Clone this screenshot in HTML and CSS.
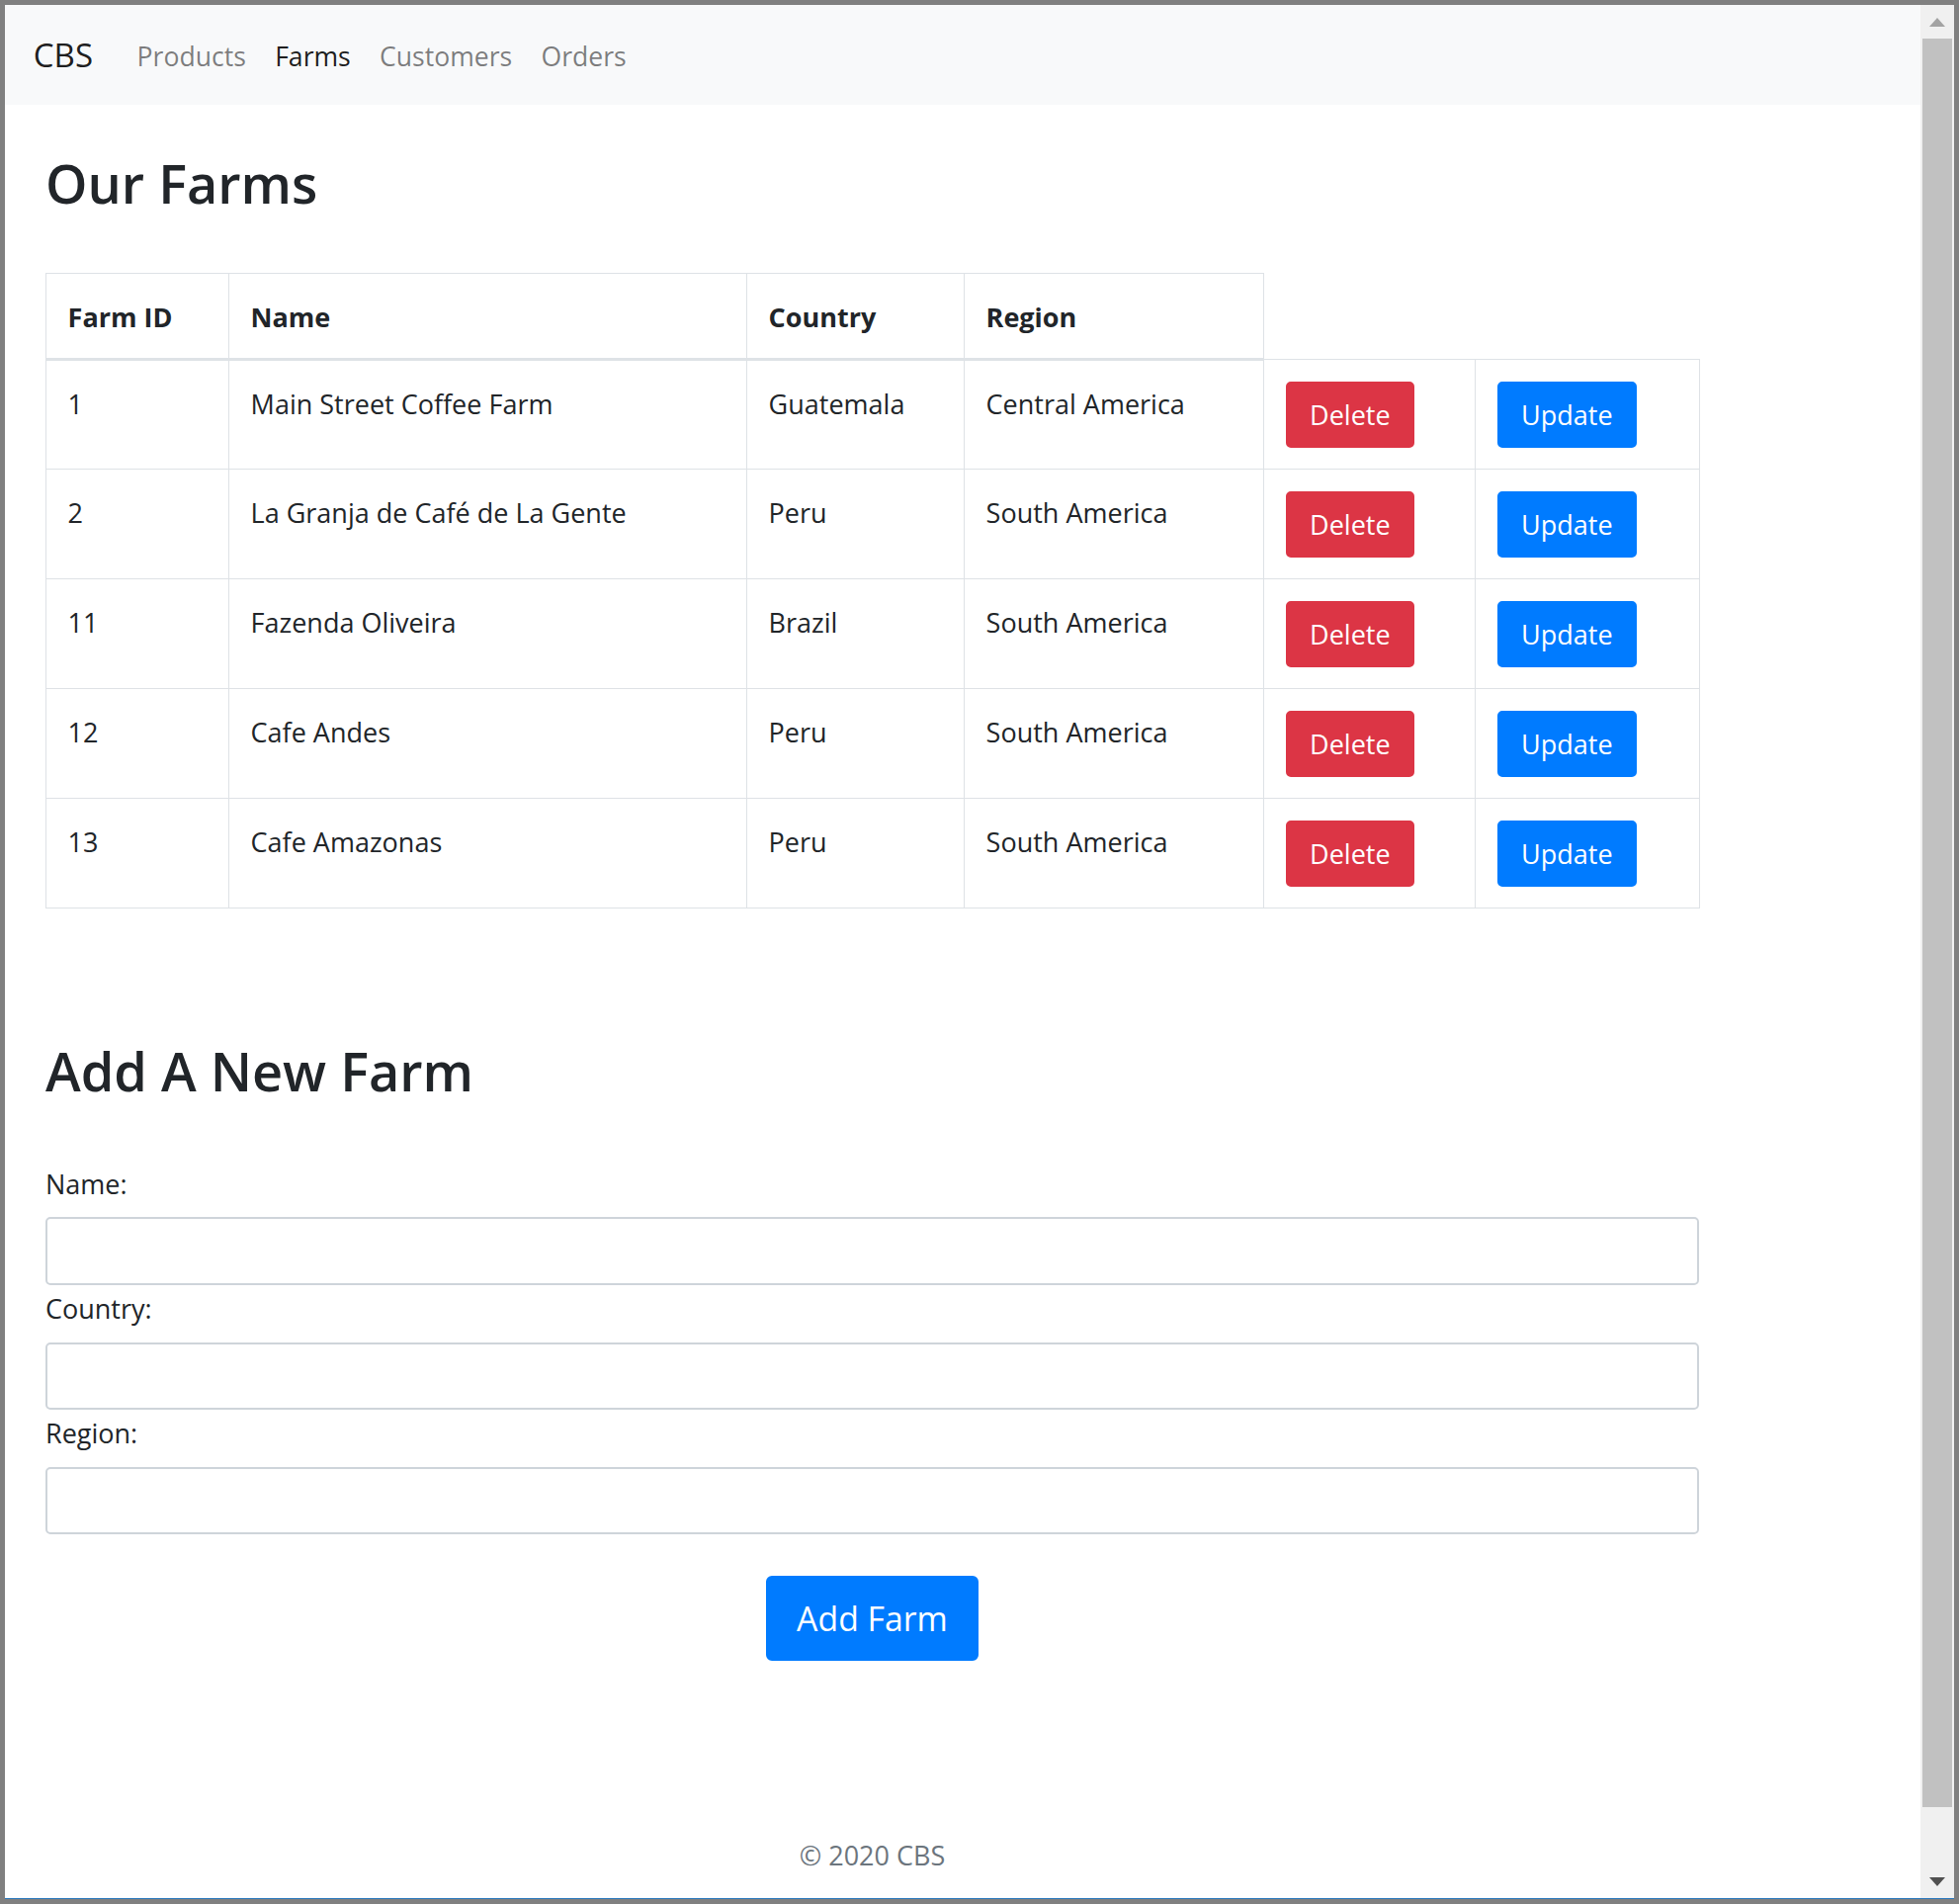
FILE: index.html
```html
<!DOCTYPE html>
<html lang="en">
<head>
<meta charset="utf-8">
<title>CBS - Farms</title>
<link rel="stylesheet" href="styles.css">
</head>
<body>
<div class="window">
  <div class="viewport">
    <div class="page">
      <nav class="navbar">
        <a class="brand" href="#">CBS</a>
        <ul class="nav">
          <li><a class="nav-link" href="#">Products</a></li>
          <li><a class="nav-link active" href="#">Farms</a></li>
          <li><a class="nav-link" href="#">Customers</a></li>
          <li><a class="nav-link" href="#">Orders</a></li>
        </ul>
      </nav>
      <main class="content">
        <h1 class="title">Our Farms</h1>
        <table class="farms">
          <colgroup>
            <col class="w-id"><col class="w-name"><col class="w-country"><col class="w-region"><col class="w-del"><col class="w-upd">
          </colgroup>
          <thead>
            <tr><th>Farm ID</th><th>Name</th><th>Country</th><th>Region</th></tr>
          </thead>
          <tbody>
            <tr><td>1</td><td>Main Street Coffee Farm</td><td>Guatemala</td><td>Central America</td><td><button class="btn btn-danger">Delete</button></td><td><button class="btn btn-primary">Update</button></td></tr>
            <tr><td>2</td><td>La Granja de Café de La Gente</td><td>Peru</td><td>South America</td><td><button class="btn btn-danger">Delete</button></td><td><button class="btn btn-primary">Update</button></td></tr>
            <tr><td>11</td><td>Fazenda Oliveira</td><td>Brazil</td><td>South America</td><td><button class="btn btn-danger">Delete</button></td><td><button class="btn btn-primary">Update</button></td></tr>
            <tr><td>12</td><td>Cafe Andes</td><td>Peru</td><td>South America</td><td><button class="btn btn-danger">Delete</button></td><td><button class="btn btn-primary">Update</button></td></tr>
            <tr><td>13</td><td>Cafe Amazonas</td><td>Peru</td><td>South America</td><td><button class="btn btn-danger">Delete</button></td><td><button class="btn btn-primary">Update</button></td></tr>
          </tbody>
        </table>

        <h1 class="title title-form">Add A New Farm</h1>
        <form class="farm-form">
          <label class="field-label" for="name">Name:</label>
          <input class="field" id="name" type="text">
          <label class="field-label" for="country">Country:</label>
          <input class="field" id="country" type="text">
          <label class="field-label" for="region">Region:</label>
          <input class="field" id="region" type="text">
          <div class="actions">
            <button class="btn-lg" type="button">Add Farm</button>
          </div>
        </form>
        <footer class="footer">© 2020 CBS</footer>
      </main>
    </div>
    <div class="scrollbar">
      <div class="sb-btn">
        <svg class="sb-arrow up" width="16" height="9" viewBox="0 0 16 9"><polygon points="0,9 8,0 16,9"/></svg>
      </div>
      <div class="sb-track"><div class="sb-thumb"></div></div>
      <div class="sb-btn">
        <svg class="sb-arrow down" width="16" height="9" viewBox="0 0 16 9"><polygon points="0,0 16,0 8,9"/></svg>
      </div>
    </div>
  </div>
</div>
</body>
</html>
```
FILE: styles.css
```css
* { box-sizing: border-box; }

html, body {
  margin: 0;
  padding: 0;
  width: 1982px;
  height: 1926px;
  overflow: hidden;
}

body {
  font-family: "Open Sans", "Noto Sans", sans-serif;
  font-size: 27px;
  line-height: 43.2px;
  color: #212529;
  background: #808080;
}

.window {
  width: 1982px;
  height: 1926px;
  border: 5px solid #808080;
  display: flex;
  flex-direction: column;
}

.viewport {
  flex: 1;
  display: flex;
  border-bottom: 1px solid #2a78bd;
  overflow: hidden;
  background: #fff;
}

.page {
  flex: 1;
  min-width: 0;
  background: #fff;
  display: flex;
  flex-direction: column;
  overflow: hidden;
}

/* Navbar */
.navbar {
  height: 101px;
  flex: none;
  background: #f8f9fa;
  display: flex;
  align-items: center;
  padding: 0 28.8px;
}

.brand {
  font-size: 33px;
  line-height: 48px;
  color: rgba(0, 0, 0, 0.9);
  text-decoration: none;
  margin-right: 30px;
}

.nav {
  list-style: none;
  margin: 0;
  padding: 0;
  display: flex;
}

.nav-link {
  display: block;
  padding: 5px 14.6px 0;
  font-size: 26.6px;
  color: rgba(0, 0, 0, 0.5);
  text-decoration: none;
}

.nav-link.active {
  color: rgba(0, 0, 0, 0.9);
}

/* Content */
.content {
  width: 1714px;
  padding-left: 41px;
}

.title {
  font-size: 54px;
  font-weight: 600;
  line-height: 69px;
  margin: 45px 0 56px;
}

.title-form {
  margin: 130px 0 58px;
}

/* Table */
.farms {
  width: 1673px;
  border-collapse: collapse;
  table-layout: fixed;
}

.w-id { width: 185px; }
.w-name { width: 524px; }
.w-country { width: 220px; }
.w-region { width: 303px; }
.w-del { width: 214px; }
.w-upd { width: 227px; }

.farms th,
.farms td {
  border: 1px solid #dee2e6;
  padding: 21.5px 21.6px;
  text-align: left;
  vertical-align: top;
}

.farms th {
  font-weight: 700;
  vertical-align: bottom;
  padding-bottom: 20.5px;
  border-bottom: 3px solid #dee2e6;
}

.btn {
  display: inline-flex;
  align-items: center;
  justify-content: center;
  height: 67px;
  padding: 0 22.5px;
  border: 2px solid transparent;
  border-radius: 5px;
  font-family: inherit;
  font-size: 27px;
  color: #fff;
  vertical-align: top;
}

.btn-danger {
  background: #dc3545;
  border-color: #dc3545;
}

.btn-primary {
  background: #007bff;
  border-color: #007bff;
}

/* Form */
.farm-form {
  width: 1673px;
  margin: 0;
}

.field-label {
  display: block;
  margin-bottom: 12px;
}

.field {
  display: block;
  width: 100%;
  height: 68.4px;
  margin-bottom: 2.5px;
  border: 2px solid #ced4da;
  border-radius: 5px;
  background: #fff;
  font-family: inherit;
  font-size: 27px;
  padding: 0 21.6px;
}

.actions {
  margin-top: 42px;
  display: flex;
  justify-content: center;
}

.btn-lg {
  height: 86.4px;
  padding: 0 28.8px;
  border: 2px solid #007bff;
  background: #007bff;
  color: #fff;
  border-radius: 6px;
  font-family: inherit;
  font-size: 33.8px;
  line-height: 54px;
}

.footer {
  width: 1673px;
  margin-top: 175px;
  text-align: center;
  color: #6c757d;
}

/* Scrollbar */
.scrollbar {
  width: 34px;
  flex: none;
  background: #f0f0f0;
  display: flex;
  flex-direction: column;
}

.sb-btn {
  height: 34px;
  flex: none;
  display: flex;
  align-items: center;
  justify-content: center;
}

.sb-arrow.up { fill: #a3a3a3; }
.sb-arrow.down { fill: #505050; }

.sb-track {
  flex: 1;
  padding: 0 2px;
}

.sb-thumb {
  height: 1789px;
  background: #c1c1c1;
}
```
